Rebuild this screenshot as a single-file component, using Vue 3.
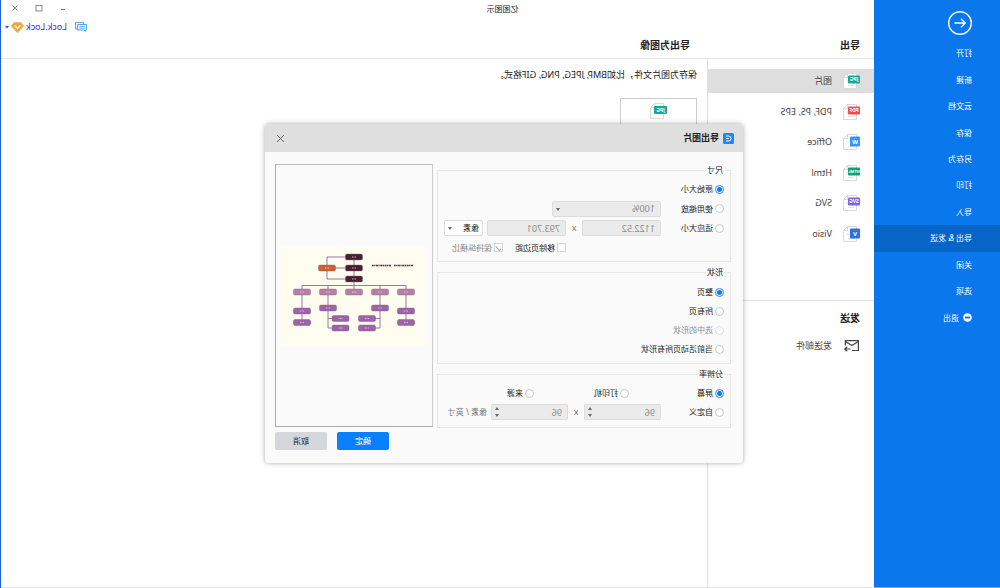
<script setup>
import { ref } from 'vue'

const menu = ['打开', '新建', '云文档', '保存', '另存为', '打印', '导入', '导出 & 发送', '关闭', '选项', '退出']
const activeMenu = ref('导出 & 发送')

const formats = [
  { name: '图片', tag: 'JPG', color: '#14a99a', wide: true },
  { name: 'PDF, PS, EPS', tag: 'PDF', color: '#fb474e', wide: true },
  { name: 'Office', tag: 'W', color: '#3b93fb', wide: false },
  { name: 'Html', tag: 'HTML', color: '#12a173', wide: true },
  { name: 'SVG', tag: 'SVG', color: '#7b68e0', wide: true },
  { name: 'Visio', tag: 'V', color: '#2a72dc', wide: false },
]
const activeFormat = ref('图片')

const size = ref('original')
const shape = ref('page')
const resolution = ref('screen')

const shapes = [
  { value: 'page', label: '整页' },
  { value: 'all', label: '所有页' },
  { value: 'selected', label: '选中的形状', disabled: true },
  { value: 'current', label: '当前活动页所有形状' },
]

const nodes = [
  { x: 72, y: 11, c: '#4a2030' },
  { x: 72, y: 22, c: '#4a2030' },
  { x: 72, y: 33, c: '#4a2030' },
  { x: 99, y: 22, c: '#c9622f' },
  { x: 124, y: 46, c: '#b77fa6' },
  { x: 98, y: 46, c: '#b77fa6' },
  { x: 72, y: 46, c: '#b77fa6' },
  { x: 46, y: 46, c: '#b77fa6' },
  { x: 20, y: 46, c: '#b77fa6' },
  { x: 124, y: 65, c: '#9e62a9' },
  { x: 124, y: 76.5, c: '#9e62a9' },
  { x: 98, y: 62, c: '#9e62a9' },
  { x: 85.5, y: 72.5, c: '#9e62a9' },
  { x: 85.5, y: 82, c: '#9e62a9' },
  { x: 46, y: 62, c: '#9e62a9' },
  { x: 59, y: 72.5, c: '#9e62a9' },
  { x: 59, y: 82, c: '#9e62a9' },
  { x: 20, y: 65, c: '#9e62a9' },
  { x: 20, y: 76.5, c: '#9e62a9' },
]
</script>

<template>
  <div class="window">
    <nav class="sidebar">
      <button class="back" type="button" aria-label="返回">
        <svg viewBox="0 0 26 26" width="26" height="26" fill="none" stroke="#fff" stroke-width="1.4">
          <circle cx="13" cy="13" r="11.3" />
          <path d="M18.5 13H8M12 8.8 7.8 13l4.2 4.2" />
        </svg>
      </button>
      <ul class="menu">
        <li v-for="item in menu" :key="item">
          <a href="#" :class="{ active: item === activeMenu }" @click.prevent="activeMenu = item">
            <svg v-if="item === '退出'" viewBox="0 0 9 9" width="9" height="9">
              <circle cx="4.5" cy="4.5" r="4.3" fill="#fff" />
              <rect x="2" y="3.5" width="5" height="2" rx="0.5" fill="#0a77ec" />
            </svg>
            {{ item }}
          </a>
        </li>
      </ul>
    </nav>

    <div class="main">
      <header class="top">
        <div class="titlebar">
          <span class="title">亿图图示</span>
          <div class="controls">
            <button type="button" aria-label="最小化">
              <svg viewBox="0 0 8 8" width="8" height="8"><path d="M2 5.5h4" stroke="#777" /></svg>
            </button>
            <button type="button" aria-label="最大化">
              <svg viewBox="0 0 8 8" width="8" height="8"><rect x="1" y="1.5" width="6" height="5.5" fill="none" stroke="#888" /></svg>
            </button>
            <button type="button" aria-label="关闭窗口">
              <svg viewBox="0 0 8 8" width="8" height="8"><path d="M1.5 1.5l5 5M6.5 1.5l-5 5" stroke="#888" /></svg>
            </button>
          </div>
        </div>
        <div class="user">
          <svg viewBox="0 0 12 10" width="12" height="10" fill="none" stroke="#55a5ee">
            <path d="M3.500 2.500V0.500h8v6.500h-1.500" />
            <path d="M0.500 2.500h9v5.500H3L1.500 9.500V8h-1z" fill="#e3f1fd" />
            <path d="M2.500 4.500h5M2.500 6.200h5" stroke-width="0.800" />
          </svg>
          <a href="#">Lock.Lock</a>
          <svg viewBox="0 0 13 11" width="13" height="11">
            <path d="M3 0.5h7L12.7 4 6.5 10.8 0.3 4z" fill="#eda93d" stroke="#eda93d" stroke-linejoin="round" stroke-width="0.6" />
            <path d="M3.8 3.5l2.7 3 2.7-3" fill="none" stroke="#fff" stroke-width="1.5" />
          </svg>
          <svg viewBox="0 0 4 3" width="4" height="3"><path d="M0 0h4L2 2.5z" fill="#1864a8" /></svg>
        </div>
        <div class="headings">
          <h2>导出</h2>
          <h2>导出为图像</h2>
        </div>
      </header>

      <div class="columns">
        <aside class="panel">
          <ul class="formats">
            <li v-for="f in formats" :key="f.name">
              <button type="button" :class="{ active: f.name === activeFormat }" @click="activeFormat = f.name">
                <svg viewBox="0 0 17 16" width="17" height="16">
                  <path d="M3.5 0.5h9l4 4v11h-13z" fill="#fff" stroke="#d9d9d9" />
                  <path d="M12.5 0.5v4h4" fill="none" stroke="#d9d9d9" />
                  <path d="M6 12.5h6M11 8h3" stroke="#e2e2e2" />
                  <rect x="0" y="2.5" :width="f.wide ? 12 : 10" :height="f.wide ? 8 : 10" rx="1" :fill="f.color" />
                  <text :x="f.wide ? 6 : 5" :y="f.wide ? 8.3 : 9.7" :font-size="f.tag.length > 3 ? 4 : f.wide ? 5 : 6" text-anchor="middle" font-weight="700" fill="#fff">{{ f.tag }}</text>
                </svg>
                <span>{{ f.name }}</span>
              </button>
            </li>
          </ul>
          <section class="send">
            <h2>发送</h2>
            <button type="button">
              <svg viewBox="0 0 17 14" width="17" height="14" fill="none" stroke="#444" stroke-width="1.2">
                <path d="M8 11.5H1.600V1.600h13v5" />
                <path d="M1.600 2.500l6.500 4 6.500-4M9.500 10h5.500M12.800 7.700l2.500 2.300-2.500 2.300" />
              </svg>
              <span>发送邮件</span>
            </button>
          </section>
        </aside>
        <main class="content">
          <p>保存为图片文件，比如BMP, JPEG, PNG, GIF格式。</p>
          <button class="card" type="button" aria-label="JPG">
            <svg viewBox="0 0 17 16" width="17" height="16">
              <path d="M3.5 0.5h9l4 4v11h-13z" fill="#fff" stroke="#d9d9d9" />
              <path d="M12.5 0.5v4h4" fill="none" stroke="#d9d9d9" />
              <rect x="0" y="3" width="13" height="8" rx="1" fill="#14a99a" />
              <text x="6.5" y="9" font-size="5" text-anchor="middle" font-weight="700" fill="#fff">JPG</text>
            </svg>
          </button>
        </main>
      </div>
    </div>

    <div class="overlay">
      <form class="dialog" role="dialog" aria-labelledby="dialog-title" @submit.prevent>
        <header class="dialog-head">
          <svg viewBox="0 0 11 11" width="11" height="11">
            <rect width="11" height="11" rx="1.5" fill="#1f86fb" />
            <path d="M8 3H5.500a2.500 2.500 0 0 0 0 5H8M5 5.500H8" fill="none" stroke="#fff" />
          </svg>
          <h1 id="dialog-title">导出图片</h1>
          <button type="button" aria-label="关闭">
            <svg viewBox="0 0 9 9" width="9" height="9"><path d="M1 1l7 7M8 1L1 8" stroke="#666" /></svg>
          </button>
        </header>

        <div class="dialog-body">
          <div class="groups">
            <fieldset>
              <legend>尺寸</legend>
              <div class="rows spread">
                <div class="row">
                  <label class="option"><input v-model="size" type="radio" name="size" value="original">原始大小</label>
                </div>
                <div class="row">
                  <label class="option first"><input v-model="size" type="radio" name="size" value="scale">使用缩放</label>
                  <span class="select wide">
                    <select disabled aria-label="缩放比例"><option>100%</option></select>
                  </span>
                </div>
                <div class="row">
                  <label class="option first"><input v-model="size" type="radio" name="size" value="fit">适应大小</label>
                  <input class="field" type="text" value="1122.52" disabled aria-label="宽度">
                  <span class="times">x</span>
                  <input class="field" type="text" value="793.701" disabled aria-label="高度">
                  <span class="select unit">
                    <select aria-label="单位"><option>像素</option></select>
                  </span>
                </div>
                <div class="row checks">
                  <label class="option"><input type="checkbox">移除页边距</label>
                  <label class="option muted"><input type="checkbox" checked disabled>保持纵横比</label>
                </div>
              </div>
            </fieldset>

            <fieldset>
              <legend>形状</legend>
              <div class="rows shapes">
                <div v-for="s in shapes" :key="s.value" class="row">
                  <label class="option" :class="{ muted: s.disabled }">
                    <input v-model="shape" type="radio" name="shape" :value="s.value" :disabled="s.disabled">{{ s.label }}
                  </label>
                </div>
              </div>
            </fieldset>

            <fieldset>
              <legend>分辨率</legend>
              <div class="rows resolution">
                <div class="row">
                  <label class="option wider"><input v-model="resolution" type="radio" name="resolution" value="screen">屏幕</label>
                  <label class="option wider"><input v-model="resolution" type="radio" name="resolution" value="printer">打印机</label>
                  <label class="option"><input v-model="resolution" type="radio" name="resolution" value="source">来源</label>
                </div>
                <div class="row">
                  <label class="option first"><input v-model="resolution" type="radio" name="resolution" value="custom">自定义</label>
                  <span class="spin"><input class="field" type="number" value="96" disabled aria-label="水平分辨率"></span>
                  <span class="times">x</span>
                  <span class="spin"><input class="field" type="number" value="96" disabled aria-label="垂直分辨率"></span>
                  <span class="per-inch">像素 / 英寸</span>
                </div>
              </div>
            </fieldset>
          </div>

          <div class="preview">
            <svg viewBox="0 0 144 100" width="144" height="100">
              <rect width="144" height="100" fill="#fffcf0" />
              <g fill="none" stroke="#9468a0" stroke-width="0.9">
                <path d="M72 11V46M72 11H99V33H72M72 22H99" />
                <path d="M20 76V39.500H124V76M98 39.500V82H85M98 72.500H85M46 39.500V82H59M46 72.500H59" />
              </g>
              <g v-for="(n, i) in nodes" :key="i">
                <rect :x="n.x - 8.5" :y="n.y - 3" width="17" height="6" rx="1.5" :fill="n.c" stroke="#7d5a76" stroke-width="0.4" />
                <path :d="`M${n.x - 2} ${n.y}h4`" stroke="#e6d3df" stroke-width="0.8" stroke-dasharray="1 0.5" />
              </g>
              <path d="M13 19.500h19M35 19.500h19" stroke="#5b3442" stroke-width="1.5" stroke-dasharray="2.2 0.5 1.2 0.4" />
            </svg>
          </div>

          <footer class="actions">
            <button class="primary" type="submit">确定</button>
            <button type="button">取消</button>
          </footer>
        </div>
      </form>
    </div>
  </div>
</template>

<style>
html,
body {
  background: #fff;
}
</style>

<style scoped>
* {
  box-sizing: border-box;
}

/* The interface is mirrored left to right as a whole. */
.window {
  position: relative;
  display: flex;
  min-height: 100vh;
  transform: scaleX(-1);
  border-right: 1px solid #1d5fcf;
  background: #fff;
  color: #222;
  font: 8px/12px "Noto Sans", "Noto Sans CJK SC", sans-serif;
}

h1,
h2,
p,
ul {
  margin: 0;
  padding: 0;
  list-style: none;
}

h2 {
  font-size: 10px;
  line-height: 14px;
  font-weight: 600;
  color: #222;
}

button,
input,
select {
  margin: 0;
  padding: 0;
  border: 0;
  background: none;
  color: inherit;
  font: inherit;
}

svg {
  display: block;
  flex: none;
}

.sidebar {
  flex: none;
  width: 126px;
  padding-top: 10px;
  border-bottom: 1px solid #73b0f3;
  background: #0a77ec;
  color: #fff;
}

.back {
  display: block;
  margin-left: 27px;
}

.menu {
  display: grid;
  grid-auto-rows: 1fr;
  height: 291px;
  margin-top: 4px;
}

.menu a {
  display: flex;
  align-items: center;
  gap: 4px;
  height: 100%;
  padding-left: 28px;
  color: #fff;
  text-decoration: none;
}

.menu a.active {
  background: #0865c8;
}

.main {
  display: flex;
  flex: 1;
  flex-direction: column;
  border-bottom: 1px solid #e0e0e0;
}

.top {
  border-bottom: 1px solid #e6e6e6;
}

.titlebar {
  display: flex;
  height: 18px;
}

.title {
  flex: 1;
  line-height: 18px;
  text-align: center;
}

.controls {
  display: flex;
  justify-content: flex-end;
  align-items: center;
  gap: 16px;
  width: 130px;
  padding: 0 10px 2px 0;
}

.user {
  display: flex;
  justify-content: flex-end;
  align-items: center;
  height: 18px;
  padding-right: 4px;
  gap: 2px;
}

.user a {
  margin-left: 6px;
  color: #4a28e0;
  font-size: 9px;
  text-decoration: none;
}

.headings {
  display: grid;
  grid-template-columns: 170px 1fr;
  height: 22px;
  padding: 2px 0 0 14px;
}

.columns {
  display: flex;
  flex: 1;
}

.panel {
  flex: none;
  width: 167px;
  padding-top: 10px;
  border-right: 1px solid #e2e2e2;
}

.formats {
  display: flex;
  flex-direction: column;
  justify-content: space-between;
  height: 177px;
}

.panel button {
  display: flex;
  align-items: center;
  gap: 11px;
  width: 100%;
  height: 24px;
  padding-left: 14px;
  color: #444;
  font-size: 9px;
}

.panel button.active {
  background: #dedede;
}

.send {
  margin-top: 54px;
  padding-top: 10px;
  border-top: 1px solid #e2e2e2;
}

.send h2 {
  margin: 0 0 9px 14px;
}

.content {
  flex: 1;
  padding: 10px;
}

.content p {
  font-size: 9px;
}

.card {
  display: flex;
  justify-content: center;
  width: 77px;
  height: 76px;
  margin-top: 17px;
  padding-top: 4px;
  border: 1px solid #ccc;
}

.overlay {
  position: absolute;
  inset: 0;
  display: flex;
  justify-content: center;
  align-items: flex-start;
  padding: 124px 7px 0 0;
}

.dialog {
  overflow: hidden;
  border-radius: 4px;
  background: #fafafa;
  box-shadow: 0 0 5px rgba(0, 0, 0, 0.35);
}

.dialog-head {
  display: flex;
  align-items: center;
  gap: 4px;
  height: 28px;
  padding: 0 11px 0 9px;
  background: #dfdfdf;
}

.dialog-head h1 {
  flex: 1;
  font-size: 9px;
  line-height: 14px;
  font-weight: 700;
}

.dialog-body {
  display: grid;
  grid-template-columns: 294px 158px;
  gap: 4px;
  padding: 12px 10px 13px 12px;
}

.groups {
  display: grid;
  gap: 4px;
}

fieldset {
  min-width: 0;
  margin: 0;
  padding: 5px 6px;
  border: 1px solid #e6e6e6;
}

legend {
  height: 12px;
  padding: 0 1px;
}

.rows {
  display: flex;
  flex-direction: column;
  gap: 3px;
}

.spread {
  justify-content: space-between;
  height: 75px;
}

.shapes {
  padding: 1px 0;
}

.resolution {
  padding-bottom: 2px;
}

.row {
  display: flex;
  align-items: center;
  height: 16px;
}

.option {
  display: flex;
  align-items: center;
  gap: 2px;
  white-space: nowrap;
}

.first {
  width: 63px;
}

.wider {
  width: 95px;
}

.muted {
  color: #8c8c8c;
}

.checks {
  gap: 12px;
  padding-left: 158px;
}

input[type="radio"],
input[type="checkbox"] {
  flex: none;
  width: 9px;
  height: 9px;
  border: 1px solid #c8c8c8;
  background: #fff;
  appearance: none;
}

input[type="radio"] {
  border-radius: 50%;
}

input[type="radio"]:checked {
  border-color: #2b87f3;
  background: radial-gradient(circle, #1478f0 2px, #fff 3px);
}

input[type="radio"]:disabled {
  border-color: #e0e0e0;
}

input[type="checkbox"] {
  display: grid;
  place-content: center;
  border-color: #d6d6d6;
}

input[type="checkbox"]:checked::after {
  width: 2px;
  height: 5px;
  border: solid #aaa;
  border-width: 0 1px 1px 0;
  transform: rotate(40deg);
  content: "";
}

.field,
select {
  width: 79px;
  height: 16px;
  padding: 0 5px;
  border: 1px solid #dcdcdc;
  border-radius: 2px;
  background: #ebebeb;
  color: #8c8c8c;
  font-size: 9px;
  opacity: 1;
  appearance: none;
}

.select,
.spin {
  position: relative;
  display: block;
}

.select select {
  display: block;
  width: 100%;
}

.wide {
  width: 109px;
}

.unit {
  width: 39px;
  margin-left: 4px;
}

.unit select {
  padding: 0 3px;
  background: #fff;
  color: #222;
  font-size: 8px;
}

.select::after,
.spin::before,
.spin::after {
  position: absolute;
  right: 4px;
  border: solid transparent;
  border-width: 0 2px;
  content: "";
}

.select::after {
  top: 7px;
  border-top: 3px solid #666;
}

.spin::before {
  top: 3px;
  border-bottom: 3px solid #666;
}

.spin::after {
  bottom: 3px;
  border-top: 3px solid #666;
}

.spin .field {
  display: block;
  width: 77px;
  appearance: textfield;
}

.times {
  width: 16px;
  color: #777;
  font-size: 9px;
  text-align: center;
}

.per-inch {
  margin-left: 4px;
  color: #777;
  white-space: nowrap;
}

.preview {
  display: grid;
  place-content: center;
  height: 263px;
  border: 1px solid #aaa;
  border-top-color: #bbb;
  border-left-color: #ccc;
}

.actions {
  display: flex;
  grid-column: 2;
  justify-content: flex-end;
  gap: 10px;
}

.actions button {
  width: 52px;
  height: 18px;
  border-radius: 2px;
  background: #d5d7dc;
}

.actions .primary {
  background: #0a80ff;
  color: #fff;
}
</style>
